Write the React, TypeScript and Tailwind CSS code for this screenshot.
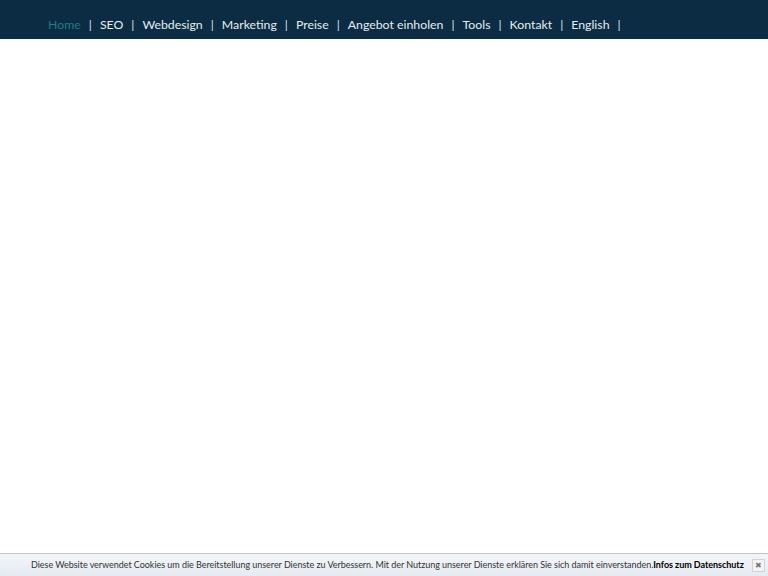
const links = ['SEO', 'Webdesign', 'Marketing', 'Preise', 'Angebot einholen', 'Tools', 'Kontakt', 'English'];

function Sep() {
  return <span className="px-[8px] text-[#d8e0e6]">|</span>;
}

export default function App() {
  return (
    <div className="flex h-[576px] w-[768px] flex-col bg-white font-['Lato',sans-serif]">
      <header className="flex h-[39px] shrink-0 items-center bg-[#0b2c42] pl-[48px] pt-[12px] text-[12.3px] text-[#e6ecf0]">
        <a className="text-[#1b7f82]">Home</a>
        <Sep />
        {links.map((l) => (
          <span className="flex" key={l}>
            <a>{l}</a>
            <Sep />
          </span>
        ))}
      </header>
      <main className="flex-1" />
      <div className="flex h-[23px] shrink-0 items-center border-t border-[#b9c6d2] bg-gradient-to-b from-[#f3f5f8] to-[#e6ebf1] pl-[31px] pr-[3px] text-[9px] tracking-[-0.04px] text-[#333]">
        <p className="flex-1 whitespace-nowrap">
          Diese Website verwendet Cookies um die Bereitstellung unserer Dienste zu Verbessern. Mit der Nutzung unserer Dienste erklären Sie sich damit einverstanden.
          <b className="text-black">Infos zum Datenschutz</b>
        </p>
        <span className="flex h-[13px] w-[13px] items-center justify-center border border-[#d0d4d8] bg-[#f4f4f4] text-[8px] leading-none text-[#777]">✖</span>
      </div>
    </div>
  );
}
